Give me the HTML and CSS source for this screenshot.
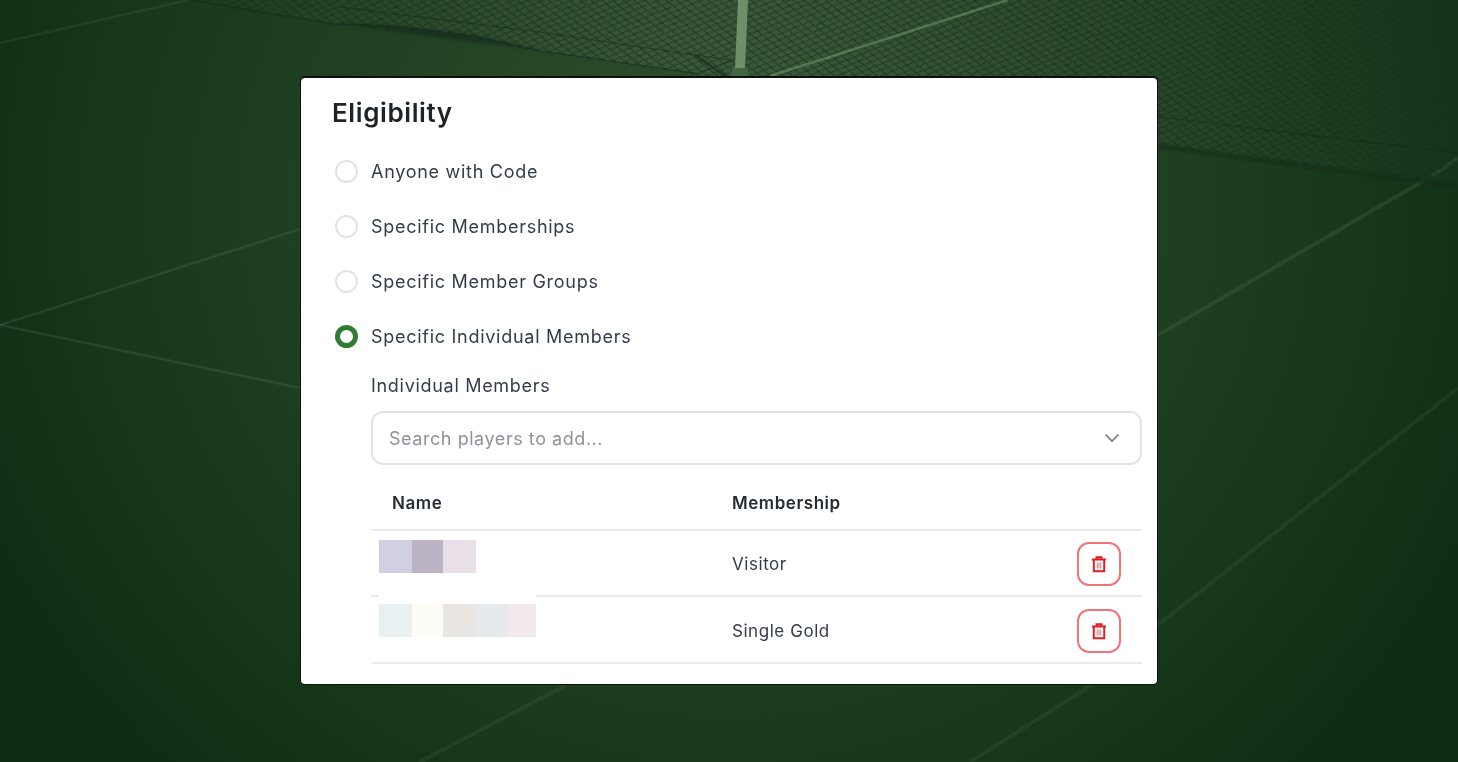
FILE: index.html
```html
<!DOCTYPE html>
<html lang="en">
<head>
<meta charset="utf-8">
<title>Eligibility</title>
<link rel="stylesheet" href="styles.css">
</head>
<body>
<svg class="court" viewBox="0 0 1458 762" preserveAspectRatio="none" aria-hidden="true">
  <defs>
    <radialGradient id="floor" gradientUnits="userSpaceOnUse" cx="0" cy="0" r="1" gradientTransform="translate(729 200) scale(830 800)">
      <stop offset="0" stop-color="#2e502d"/>
      <stop offset=".45" stop-color="#214222"/>
      <stop offset=".75" stop-color="#17381b"/>
      <stop offset="1" stop-color="#0e2c14"/>
    </radialGradient>
    <pattern id="mesh" width="12" height="7" patternUnits="userSpaceOnUse" patternTransform="rotate(5) skewX(-12)">
      <path d="M0 3.500 6 0 12 3.500 6 7Z" fill="none" stroke="#142f1a" stroke-width=".9" stroke-opacity=".75"/>
    </pattern>
    <linearGradient id="netFade" gradientUnits="userSpaceOnUse" x1="190" x2="1458" y1="0" y2="0">
      <stop offset="0" stop-color="#fff" stop-opacity=".01"/>
      <stop offset=".42" stop-color="#fff" stop-opacity=".08"/>
      <stop offset="1" stop-color="#fff" stop-opacity=".01"/>
    </linearGradient>
    <filter id="soft" x="-5%" y="-50%" width="110%" height="200%"><feGaussianBlur stdDeviation="1"/></filter>
  </defs>
  <rect width="1458" height="762" fill="url(#floor)"/>
  <g stroke="#fff" fill="none">
    <path d="M0 43 188 0" stroke-opacity=".06" stroke-width="2.500"/>
    <path d="M0 325 300 229" stroke-opacity=".08" stroke-width="2.500"/>
    <path d="M0 325 300 388" stroke-opacity=".08" stroke-width="2.500"/>
    <path d="M1158 335 1425 180M1432 176 1458 158" stroke-opacity=".07" stroke-width="4"/>
    <path d="M1158 625 1458 388" stroke-opacity=".05" stroke-width="4"/>
    <path d="M970 762 1092 685M420 762 566 685" stroke-opacity=".05" stroke-width="4"/>
  </g>
  <path d="M190 0 340 25 400 28 470 37 540 52 700 75 1158 145 1458 186V0Z" fill="url(#netFade)"/>
  <path d="M190 0 340 25 400 28 470 37 540 52 700 75 1158 145 1458 186V0Z" fill="url(#mesh)"/>
  <g fill="none" stroke="#10291a">
    <path d="M190 0 340 25" stroke-width="1.500" stroke-opacity=".5"/>
    <path d="M340 24 400 27 470 36 540 51 700 74" stroke-width="1.500" stroke-opacity=".55"/>
    <path d="M1158 146 1458 186" stroke-width="4" stroke-opacity=".55" filter="url(#soft)"/>
    <path d="M340 7 540 32 620 44 730 60" stroke-width="1" stroke-opacity=".55"/>
    <path d="M1159 117 1458 153" stroke-width="1" stroke-opacity=".5"/>
    <path d="M695 55 728 78" stroke-width="3" stroke-opacity=".6"/>
    <path d="M700 72 735 60" stroke-width="1" stroke-opacity=".5"/>
  </g>
  <path d="M345 24 400 26 470 34 540 50 470 42 400 32Z" fill="#10291a" fill-opacity=".6" filter="url(#soft)"/>
  <path d="M770 76 1008 0" stroke="#7aa070" stroke-opacity=".5" stroke-width="2.500" fill="none"/>
  <path d="M738 0H748L745 68H735Z" fill="#6c9068"/>
  <path d="M733 68H747L750 78H730Z" fill="#3f6740"/>
</svg>

<div class="page">
  <main class="modal">
    <h2 class="title">Eligibility</h2>
    <div class="options">
      <label class="option"><span class="radio"></span><span>Anyone with Code</span></label>
      <label class="option"><span class="radio"></span><span>Specific Memberships</span></label>
      <label class="option"><span class="radio"></span><span>Specific Member Groups</span></label>
      <label class="option"><span class="radio radio-on"></span><span>Specific Individual Members</span></label>
    </div>
    <section class="members">
      <div class="field-label">Individual Members</div>
      <div class="select">
        <span>Search players to add...</span>
        <svg class="chevron" viewBox="0 0 16 16" aria-hidden="true"><path d="M1.500 4.500 8 11l6.500-6.500"/></svg>
      </div>
      <div class="table">
        <div class="row row-head">
          <div class="col-name">Name</div>
          <div class="col-type">Membership</div>
        </div>
        <div class="row row-a">
          <div class="col-name">
            <div class="blur">
              <i class="b1"></i><i class="b2"></i><i class="b3"></i>
            </div>
          </div>
          <div class="col-type">Visitor</div>
          <button class="trash" type="button" aria-label="Remove">
            <svg viewBox="0 0 18 18" aria-hidden="true"><path d="M2 4.500h14M6.500 4V2.200h5V4M3.800 4.500v11.700h10.400V4.500"/><path class="thin" d="M7.300 7.500v6M9 7.500v6M10.700 7.500v6"/></svg>
          </button>
        </div>
        <div class="row row-b">
          <div class="col-name">
            <div class="blur blur-long">
              <i class="b4"></i><i class="b5"></i><i class="b6"></i><i class="b7"></i><i class="b8"></i>
            </div>
          </div>
          <div class="col-type">Single Gold</div>
          <button class="trash" type="button" aria-label="Remove">
            <svg viewBox="0 0 18 18" aria-hidden="true"><path d="M2 4.500h14M6.500 4V2.200h5V4M3.800 4.500v11.700h10.400V4.500"/><path class="thin" d="M7.300 7.500v6M9 7.500v6M10.700 7.500v6"/></svg>
          </button>
        </div>
      </div>
    </section>
  </main>
</div>
</body>
</html>
```

FILE: styles.css
```css
* { box-sizing: border-box; }

html, body {
  margin: 0;
  height: 100%;
  overflow: hidden;
  background: #1d3f24;
}

body {
  font-family: Inter, "Liberation Sans", sans-serif;
  color: #343c4a;
}

.court {
  position: fixed;
  inset: 0;
  width: 100%;
  height: 100%;
  display: block;
}

.page {
  position: relative;
  height: 762px;
  display: flex;
  align-items: center;
  justify-content: center;
}

.modal {
  width: 856px;
  height: 606px;
  background: #fff;
  border-radius: 4px;
  padding: 17px 15px 0 31px;
  box-shadow: 0 -1px 0 1px #0b120c, 1px 0 0 #0b120c, -1px 0 0 #1a2a1c, 0 1px 0 #0b120c;
  overflow: hidden;
}

.title {
  margin: 0;
  font-size: 26px;
  line-height: 36px;
  font-weight: 600;
  color: #1f2328;
  letter-spacing: .6px;
}

.options {
  margin-top: 24px;
  display: flex;
  flex-direction: column;
  gap: 23px;
}

.option {
  display: flex;
  align-items: center;
  gap: 13px;
  height: 32px;
  padding-left: 3px;
  font-size: 18px;
  letter-spacing: .72px;
}

.radio {
  width: 23px;
  height: 23px;
  border: 2px solid #e1e3e5;
  border-radius: 50%;
  background: #fff;
  flex: none;
}

.radio-on {
  border: 5px solid #2e7d32;
}

.members {
  margin-left: 39px;
}

.field-label {
  margin-top: 21px;
  font-size: 18px;
  line-height: 26px;
  letter-spacing: .7px;
}

.select {
  margin-top: 12px;
  height: 54px;
  border: 2px solid #e1e3e5;
  border-radius: 12px;
  padding: 0 20px 0 16px;
  display: flex;
  align-items: center;
  justify-content: space-between;
  font-size: 18px;
  letter-spacing: .55px;
  color: #8d939b;
}

.chevron {
  width: 16px;
  height: 16px;
  fill: none;
  stroke: #737a82;
  stroke-width: 1.600;
}

.row {
  display: grid;
  grid-template-columns: 361px 1fr 44px;
  align-items: center;
  height: 67px;
  padding-right: 21px;
  border-bottom: 2px solid #e9eaec;
  font-size: 17px;
  letter-spacing: .55px;
}

.row-a {
  height: 66px;
  padding-top: 1px;
}

.row-b {
  padding-top: 2px;
}

.row-head {
  height: 66px;
  padding-top: 12px;
  font-weight: 600;
  color: #262c34;
}

.col-name {
  padding-left: 21px;
}

.blur {
  display: flex;
  width: 157px;
  height: 33px;
  margin: -14px 0 0 -13px;
}

.blur-long {
  height: 43px;
  margin-top: -31px;
  border-top: 10px solid #fff;
  position: relative;
}

.blur i { display: block; height: 100%; }
.b1 { width: 33px; background: #d0d0e2; }
.b2 { width: 31px; background: #bcb4c4; }
.b3 { width: 33px; background: #e8e0e6; }
.b4 { width: 33px; background: #e9f0f2; }
.b5 { width: 31px; background: #fcfcf5; }
.b6 { width: 33px; background: #e9e5e3; }
.b7 { width: 33px; background: #e6eaed; }
.b8 { width: 27px; background: #f3eaeb; }

.trash {
  width: 44px;
  height: 44px;
  padding: 0;
  border: 2px solid #f07478;
  border-radius: 12px;
  background: #fff;
  display: flex;
  align-items: center;
  justify-content: center;
}

.trash svg {
  width: 18px;
  height: 18px;
  fill: none;
  stroke: #e01e26;
  stroke-width: 2;
}

.trash .thin {
  stroke-width: 1;
  stroke-opacity: .6;
}
```
